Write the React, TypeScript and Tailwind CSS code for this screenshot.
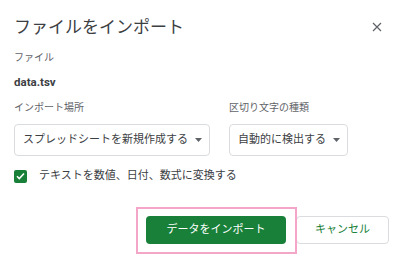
import React from "react";

const jp = "font-['Roboto','Noto_Sans_CJK_JP',sans-serif]";

function Caret() {
  return (
    <svg width="7" height="4" viewBox="0 0 7 4" className="ml-[7px] shrink-0">
      <path d="M0 0h7L3.5 4z" fill="#5f6368" />
    </svg>
  );
}

function Select({ label, value, width }: { label: string; value: string; width: string }) {
  return (
    <div className="flex flex-col">
      <div className="text-[10px] leading-[14px] text-[#5f6368]">{label}</div>
      <div
        className={`mt-[9px] h-[32px] ${width} flex items-center pl-[8px] border border-[#dadce0] rounded-[4px] text-[11px] text-[#3c4043]`}
      >
        <span>{value}</span>
        <Caret />
      </div>
    </div>
  );
}

export default function App() {
  return (
    <div className={`w-[400px] h-[260px] bg-white relative overflow-hidden ${jp}`}>
      <div className="flex flex-col pl-[14px] pr-[11px]">
        {/* Header */}
        <div className="flex items-center justify-between mt-[17px] h-[20px]">
          <h1 className="text-[17px] leading-[20px] text-[#3c4043] font-normal">ファイルをインポート</h1>
          <svg width="10" height="10" viewBox="0 0 10 10" className="mr-[7px]">
            <path d="M1 1l8 8M9 1l-8 8" stroke="#5f6368" strokeWidth="1.2" />
          </svg>
        </div>

        <div className="mt-[14px] text-[10px] leading-[14px] text-[#5f6368]">ファイル</div>
        <div className="mt-[10px] text-[11.5px] leading-[14px] font-bold text-[#3c4043]">data.tsv</div>

        <div className="mt-[12px] flex gap-[19px]">
          <Select label="インポート場所" value="スプレッドシートを新規作成する" width="w-[196px]" />
          <Select label="区切り文字の種類" value="自動的に検出する" width="w-[119px]" />
        </div>

        <div className="mt-[13px] flex items-center h-[14px]">
          <div className="w-[13px] h-[13px] rounded-[2px] bg-[#188038] flex items-center justify-center">
            <svg width="9" height="8" viewBox="0 0 9 8">
              <path d="M1 4.2l2.3 2.3L8 1.5" stroke="#fff" strokeWidth="1.6" fill="none" />
            </svg>
          </div>
          <span className="ml-[12px] text-[11px] text-[#3c4043]">テキストを数値、日付、数式に変換する</span>
        </div>

        {/* Buttons */}
        <div className="mt-[33px] flex justify-end gap-[10px]">
          <div className="relative">
            <button className="w-[140px] h-[28px] rounded-[4px] bg-[#188038] text-white text-[11px]">
              データをインポート
            </button>
            <div className="absolute -left-[10px] -right-[11px] -top-[9px] -bottom-[10px] border-[2px] border-[#f4a6c8] pointer-events-none" />
          </div>
          <button className="w-[93px] h-[28px] rounded-[4px] border border-[#dadce0] bg-white text-[#188038] text-[11px]">
            キャンセル
          </button>
        </div>
      </div>
    </div>
  );
}
